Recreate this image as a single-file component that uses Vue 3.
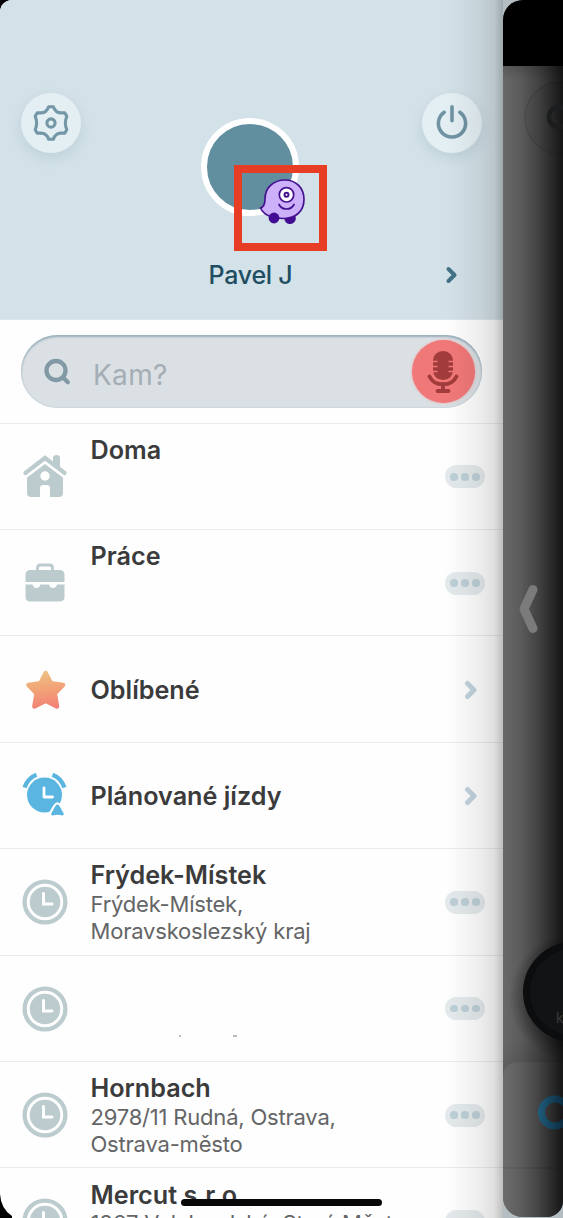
<script setup>
const rows = [
  { icon: 'home', title: 'Doma', action: 'more' },
  { icon: 'work', title: 'Práce', action: 'more' },
  { icon: 'star', title: 'Oblíbené', action: 'go' },
  { icon: 'alarm', title: 'Plánované jízdy', action: 'go' },
  { icon: 'clock', title: 'Frýdek-Místek', lines: ['Frýdek-Místek,', 'Moravskoslezský kraj'], action: 'more' },
  { icon: 'clock', title: '', specks: true, action: 'more' },
  { icon: 'clock', title: 'Hornbach', lines: ['2978/11 Rudná, Ostrava,', 'Ostrava-město'], action: 'more' },
  { icon: 'clock', title: 'Mercut s.r.o.', lines: ['1867 Velehradská, Staré Město'], action: 'more' },
]
</script>

<template>
  <div class="screen">
    <main class="drawer">
      <header class="profile">
        <div class="tools">
          <button class="round">
            <svg width="36" height="38" viewBox="0 0 36 38" fill="none" stroke="#7397a7" stroke-width="3.1" stroke-linejoin="round">
              <path d="M15.600 2.800h4.800c1.200 3.800 3.600 6 7.600 6.100h3.800l2 3.400c-2 4.600-2 8.800 0 13.400l-2 3.400h-3.800c-4 .1-6.400 2.300-7.600 6.100h-4.800c-1.200-3.800-3.600-6-7.600-6.100H4.200l-2-3.400c2-4.600 2-8.800 0-13.400l2-3.400H8c4-.1 6.400-2.300 7.600-6.100z" />
              <circle cx="18" cy="19" r="4.1" />
            </svg>
          </button>
          <button class="round">
            <svg width="36" height="38" viewBox="0 0 36 38" fill="none" stroke="#7094a4" stroke-width="3.6" stroke-linecap="round">
              <path d="M10.2 8.3a13.6 13.6 0 1 0 15.6 0M18 2.8v14" />
            </svg>
          </button>
        </div>
        <div class="avatar">
          <svg class="badge" width="93" height="86" viewBox="0 0 93 86">
            <path d="M31 34c0-11 8-19 20-19 11 0 19 8 19 19.500 0 12-9 19-20 19-13 0-20-3-23.500-10.500 3-1 4.500-4 4.500-9z" fill="#ccb0fa" stroke="#45128f" stroke-width="1.700" stroke-linejoin="round" />
            <circle cx="52.500" cy="29.800" r="7.200" fill="#fff" stroke="#45128f" stroke-width="1.700" />
            <circle cx="52.500" cy="29.800" r="2" fill="#fff" stroke="#45128f" stroke-width="2" />
            <path d="M45 39.500c3 6 12 6 15 0" fill="none" stroke="#45128f" stroke-width="1.700" stroke-linecap="round" />
            <circle cx="40" cy="53" r="5.400" fill="#420d92" />
            <path d="M51 53.500c4 0 7-.5 10-2 1 4-1 7-5 7s-5-2.500-5-5z" fill="#420d92" stroke="#420d92" />
            <rect x="4" y="4" width="85" height="78" fill="none" stroke="#e73d25" stroke-width="8" />
          </svg>
        </div>
        <div class="name">
          <span class="person">Pavel J</span>
          <svg class="namechev" width="12" height="18" viewBox="0 0 12 18" fill="none" stroke="#427286" stroke-width="3.900" stroke-linecap="round" stroke-linejoin="round"><path d="M2.500 3 8.500 9l-6 6" /></svg>
        </div>
      </header>

      <div class="searchbar">
        <div class="field">
          <svg width="28" height="28" viewBox="0 0 28 28" fill="none" stroke="#8199a5" stroke-width="4.300" stroke-linecap="round"><circle cx="13" cy="12.500" r="9.500" /><path d="m20 19.500 4.800 4.800" /></svg>
          <span class="hint">Kam?</span>
          <div class="mic">
            <svg width="32" height="42" viewBox="0 0 32 42">
              <rect x="6" y="0" width="20" height="29" rx="9.800" fill="#a23b3b" />
              <path d="M5.500 10.500h5M5.500 15.500h5M5.500 20.500h5M21.500 10.500h5M21.500 15.500h5M21.500 20.500h5" stroke="#f17878" stroke-width="1.700" />
              <path d="M2.500 25.500c5 10.500 22 10.500 27 0" fill="none" stroke="#a23b3b" stroke-width="3.800" stroke-linecap="round" />
              <path d="M16 33v7M10.500 40h11" fill="none" stroke="#a23b3b" stroke-width="3.800" stroke-linecap="round" />
            </svg>
          </div>
        </div>
      </div>

      <section v-for="(row, i) in rows" :key="i" class="row">
        <div class="icon">
          <svg v-if="row.icon === 'home'" width="46" height="46" viewBox="0 0 46 46">
            <path d="M23 10 41 23.500V39q0 4-4 4H28V34q0-3-3-3H21q-3 0-3 3v9H9q-4 0-4-4V23.500z" fill="#bccbcd" />
            <path d="M3.500 19 23 4l19.500 15" fill="none" stroke="#bccbcd" stroke-width="4.200" stroke-linecap="round" />
            <path d="M31 9V4q0-3 3.500-3T38 4v11z" fill="#bccbcd" />
            <path d="M2 24 23 8.500 44 24" fill="none" stroke="#fff" stroke-width="2" />
            <circle cx="23" cy="22" r="4.700" fill="#fff" />
          </svg>
          <svg v-else-if="row.icon === 'work'" width="46" height="46" viewBox="0 0 46 46">
            <path d="M15.500 12V8q0-3 3-3h9q3 0 3 3V12" fill="none" stroke="#bccbcd" stroke-width="2.800" />
            <path d="M8.500 10h29q5 0 5 5v7H3.500v-7q0-5 5-5z" fill="#bccbcd" />
            <path d="M3.500 24.500H10.500q1 3.500 4 3.500t4-3.500H27q1 3.500 4 3.500t4-3.500h7.500V36.500q0 5-5 5h-29q-5 0-5-5z" fill="#bccbcd" />
          </svg>
          <svg v-else-if="row.icon === 'star'" width="46" height="46" viewBox="0 0 46 46">
            <defs><linearGradient id="sun" gradientUnits="userSpaceOnUse" x1="20" y1="4" x2="25" y2="42"><stop offset="0" stop-color="#edc384" /><stop offset=".5" stop-color="#f2a377" /><stop offset="1" stop-color="#f28175" /></linearGradient></defs>
            <path d="m23.700 7 5.300 10.200 12 1.800-8.200 8.500 2.200 13-11.300-5.700-11.300 5.700 2.200-13-8.200-8.500 12-1.800z" fill="url(#sun)" stroke="url(#sun)" stroke-width="4.500" stroke-linejoin="round" />
          </svg>
          <svg v-else-if="row.icon === 'alarm'" class="alarm" width="48" height="48" viewBox="0 0 48 48" fill="none">
            <circle cx="23.500" cy="24" r="17.500" fill="#5ab5e0" />
            <path d="M3.500 16.500Q7 7 15.500 3.800M43.500 16.500Q40 7 31.500 3.800" stroke="#5ab5e0" stroke-width="4.300" />
            <path d="M23 17v9h8.500" stroke="#fff" stroke-width="2.800" stroke-linecap="round" stroke-linejoin="round" />
            <path d="M36.500 33.500c2 0 3.500 4.500 6 8.500.8 2-.4 2.800-2 2.200q-4-.8-8 0c-1.600.6-2.800-.2-2-2.200 2.500-4 4-8.500 6-8.500z" fill="#5ab5e0" stroke="#fff" stroke-width="4.500" paint-order="stroke" />
          </svg>
          <svg v-else width="46" height="46" viewBox="0 0 46 46" fill="none">
            <circle cx="23" cy="23" r="20.400" stroke="#bccbcd" stroke-width="4.300" />
            <circle cx="23" cy="23" r="15.300" fill="#bccbcd" />
            <path d="M21.500 14.500V25h8.500" stroke="#fff" stroke-width="2.900" stroke-linecap="round" />
          </svg>
        </div>
        <div class="copy" :class="{ centered: row.action === 'go' }">
          <div class="title">{{ row.title }}</div>
          <div v-for="line in row.lines" :key="line" class="line">{{ line }}</div>
          <svg v-if="row.specks" class="specks" width="170" height="4" viewBox="0 0 170 4"><path d="M88 2h2M142 2h4" stroke="#777" stroke-width="1.200" /></svg>
        </div>
        <div v-if="row.action === 'more'" class="more"><i /><i /><i /></div>
        <svg v-else class="go" width="14" height="20" viewBox="0 0 14 20" fill="none" stroke="#c2d3dd" stroke-width="5" stroke-linecap="round" stroke-linejoin="round"><path d="m3.500 3.500 6.500 6.500-6.500 6.500" /></svg>
      </section>
      <div class="edge" />
    </main>

    <aside class="map">
      <div class="status" />
      <svg class="mapart" width="60" height="1218" viewBox="0 0 60 1218">
        <defs>
          <linearGradient id="dim"><stop offset="0" stop-color="#000" stop-opacity="0" /><stop offset=".3" stop-color="#000" stop-opacity=".14" /><stop offset=".6" stop-color="#000" stop-opacity=".38" /><stop offset="1" stop-color="#000" stop-opacity=".8" /></linearGradient>
          <linearGradient id="drop" x1="0" y1="0" x2="0" y2="1"><stop offset="0" stop-color="#000" stop-opacity=".14" /><stop offset="1" stop-color="#000" stop-opacity="0" /></linearGradient>
          <linearGradient id="rise" x1="0" y1="0" x2="0" y2="1"><stop offset="0" stop-color="#000" stop-opacity="0" /><stop offset="1" stop-color="#000" stop-opacity=".14" /></linearGradient>
          <linearGradient id="ring" gradientUnits="userSpaceOnUse" x1="35" y1="0" x2="60" y2="0"><stop offset="0" stop-color="#205c7c" /><stop offset="1" stop-color="#0b2c40" /></linearGradient>
          <radialGradient id="halo"><stop offset=".75" stop-color="#000" stop-opacity=".3" /><stop offset="1" stop-color="#000" stop-opacity="0" /></radialGradient>
        </defs>
        <rect y="66" width="60" height="14" fill="url(#drop)" />
        <circle cx="58" cy="118" r="36" fill="#666" stroke="#5c5c5c" stroke-width="1.500" />
        <circle cx="70" cy="997" r="64" fill="url(#halo)" />
        <rect y="1040" width="60" height="42" fill="url(#rise)" />
        <path d="M0 1218V1078q0-16 16-16h44v156z" fill="#6c6c6c" />
        <path d="M0 1168h60" stroke="#5c5c5c" />
        <rect width="60" height="1218" y="66" fill="url(#dim)" />
        <circle cx="56" cy="117" r="10" fill="none" stroke="#1a1c1e" stroke-width="4.500" />
        <circle cx="52" cy="1112.500" r="13.500" fill="none" stroke="url(#ring)" stroke-width="7" />
        <circle cx="70" cy="992" r="50" fill="#0c0d0e" />
        <circle cx="70" cy="992" r="43" fill="#111315" />
        <text x="53" y="1023" class="unit">k</text>
        <path d="m30 589.500-9 19.500 9 19.500" fill="none" stroke="#7b7b7b" stroke-width="9" stroke-linecap="round" stroke-linejoin="round" />
      </svg>
    </aside>
    <div class="homebar" />
    <svg class="corner" width="14" height="24" viewBox="0 0 14 24"><path d="M0 0q1 15 12 22v2H0z" fill="#000" /></svg>
  </div>
</template>

<style>
body { background: #000; overflow: hidden; }
</style>
<style scoped>
.screen { position: relative; display: flex; width: 563px; height: 1218px; overflow: hidden; background: #b4bdc1; font-family: Inter, "Open Sans", sans-serif; }
.screen::before { content: ""; position: absolute; left: 0; top: 0; width: 20px; height: 20px; background: #000; }
.drawer { position: relative; width: 503px; height: 1218px; overflow: hidden; border-radius: 12px 0 0 0; background: #fefefe; }
.profile { box-sizing: border-box; height: 320px; padding-top: 93px; background: #d3e1e8; border-bottom: 1px solid #dce6eb; }
.tools { display: flex; justify-content: space-between; height: 60px; padding: 0 21px; }
.round { display: grid; place-items: center; width: 60px; height: 60px; padding: 0; border: 0; border-radius: 50%; background: #e4eff4; box-shadow: 0 5px 12px rgba(120, 155, 170, .22); }
.avatar { position: relative; box-sizing: border-box; width: 98px; height: 98px; margin: -35px auto 0 201px; border: 6px solid #fff; border-radius: 50%; background: #628fa0; }
.badge { position: absolute; left: 27px; top: 41px; }
.name { display: flex; align-items: center; justify-content: space-between; height: 34px; margin-top: 42px; padding: 0 45px 0 208.500px; }
.person { font-size: 25px; font-weight: 500; letter-spacing: -.25px; color: #214d62; }
.namechev { margin-top: -1px; }
.searchbar { height: 102.700px; box-sizing: border-box; padding: 15px 21px 0; }
.field { display: flex; align-items: center; box-sizing: border-box; width: 461px; height: 73px; padding: 0 7.500px 0 22px; border-radius: 37px; background: #dae0e4; box-shadow: inset 0 2px 2px #9bb0bd, inset 0 0 2px #b2c3cd; }
.hint { flex: 1; margin: 6px 0 0 22px; font-size: 28px; letter-spacing: .3px; color: #a5aeb5; }
.mic { display: grid; place-items: center; width: 63px; height: 63px; border-radius: 50%; background: #f17878; box-shadow: 0 0 3px #f3a4a5; }
.row { box-sizing: border-box; display: flex; height: 106.400px; border-top: 1px solid #ebeced; }
.icon { display: grid; place-items: center; width: 90.500px; height: 106px; flex: none; }
.alarm { margin-top: -2px; }
.copy { position: relative; flex: 1; padding-top: 11.200px; white-space: nowrap; }
.centered { padding-top: 38.600px; }
.title { height: 30.800px; line-height: 30px; font-size: 25.200px; font-weight: 600; letter-spacing: 0; color: #3b3b3c; }
.line { height: 26.500px; line-height: 26.500px; font-size: 22px; letter-spacing: -.2px; color: #646566; }
.specks { position: absolute; left: 0; top: 78px; }
.more { display: flex; align-items: center; justify-content: center; gap: 3px; width: 40px; height: 23px; margin: 41.500px 18px 0 0; border-radius: 12px; background: #e4e9eb; }
.more i { width: 7.700px; height: 7.700px; border-radius: 50%; background: #bdcfd7; }
.go { margin: 43.500px 25px 0 0; }
.edge { position: absolute; right: 0; top: 0; width: 58px; height: 1218px; background: linear-gradient(90deg, rgba(0,0,0,0), rgba(0,0,0,.025) 25%, rgba(0,0,0,.065) 60%, rgba(0,0,0,.12) 85%, rgba(0,0,0,.25)); }
.map { position: relative; width: 60px; height: 1217px; overflow: hidden; border-radius: 20px 0 16px 20px; background: #696969; }
.status { height: 66px; background: #000; }
.mapart { position: absolute; left: 0; top: 0; }
.unit { font-size: 14px; fill: #37393b; }
.homebar { position: absolute; left: 181px; top: 1198.500px; width: 201px; height: 7px; border-radius: 4px; background: #080808; }
.corner { position: absolute; left: 0; bottom: 0; }
</style>
